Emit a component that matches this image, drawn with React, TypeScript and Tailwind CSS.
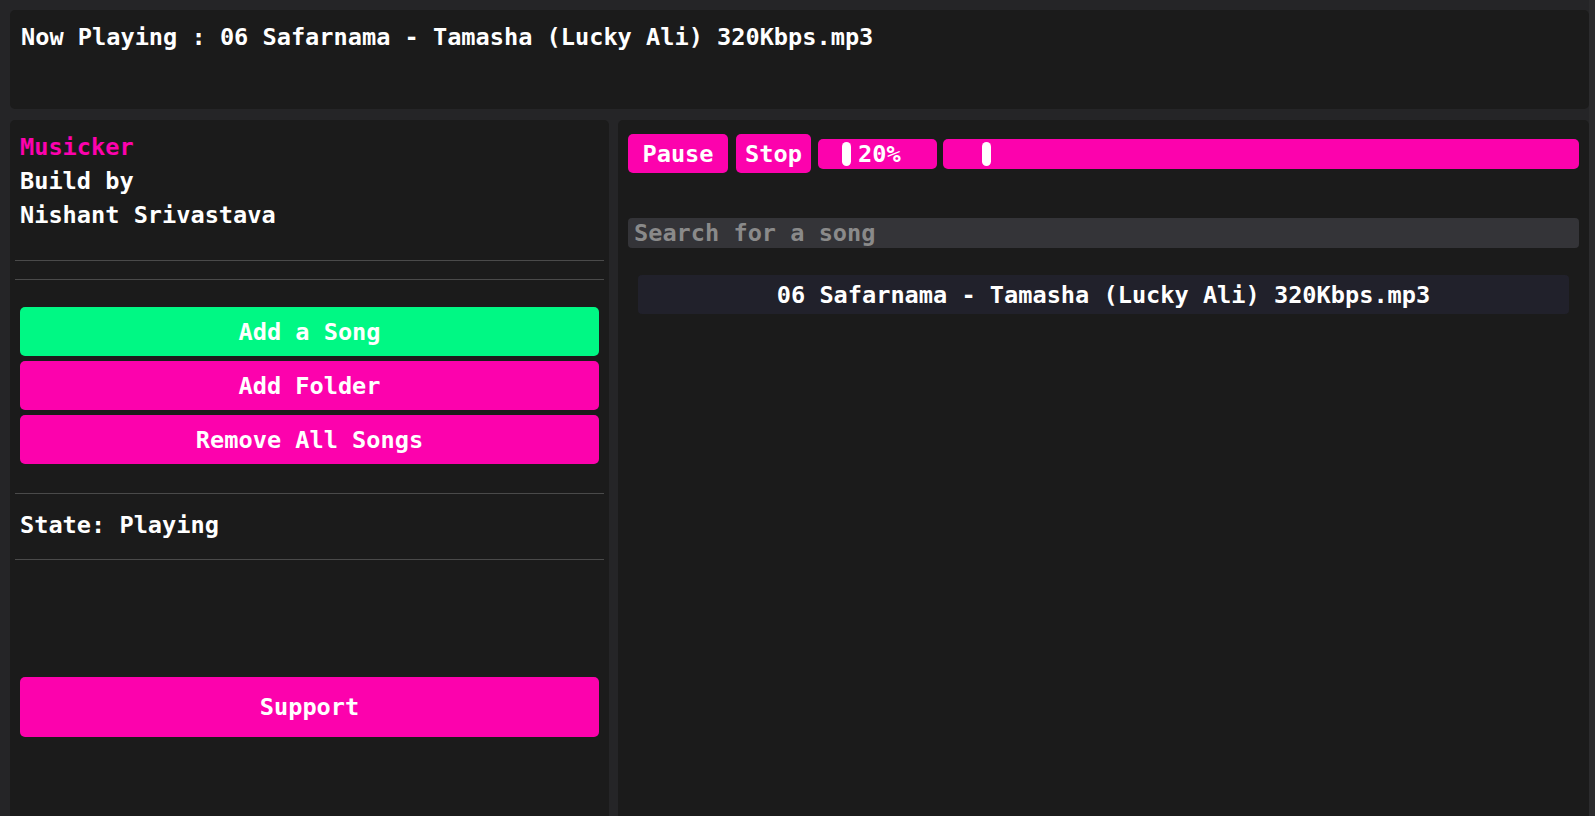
import React from "react";

const pink = "bg-[#fc02ad]";

function SideButton({ label, color, tall }: { label: string; color: string; tall?: boolean }) {
  return (
    <button
      className={`${color} ${tall ? "h-[60px]" : "h-[49px]"} w-full rounded-[5px] text-white text-center font-bold`}
    >
      {label}
    </button>
  );
}

export default function App() {
  const song = "06 Safarnama - Tamasha (Lucky Ali) 320Kbps.mp3";

  return (
    <div className="h-screen overflow-hidden bg-[#252527] flex text-white font-bold font-['DejaVu_Sans_Mono',monospace] text-[23.6px] leading-[34px]">
      <div className="w-[1589px] pl-[10px] pt-[10px] flex flex-col">
        {/* Now playing */}
        <div className="h-[99px] rounded-[5px] bg-[#1b1b1b] px-[11px] pt-[10px]">
          Now Playing : {song}
        </div>

        <div className="mt-[11px] flex gap-[9px] flex-1">
          {/* Sidebar */}
          <div className="w-[599px] rounded-t-[5px] bg-[#1b1b1b] px-[5px] pt-[10px]">
            <div className="px-[5px]">
              <div className="text-[#fc02ad]">Musicker</div>
              <div>Build by</div>
              <div>Nishant Srivastava</div>
            </div>
            <div className="mt-[28px] h-px bg-[#4a4a4a]" />
            <div className="mt-[18px] h-px bg-[#4a4a4a]" />
            <div className="mt-[27px] px-[5px] flex flex-col gap-[5px]">
              <SideButton label="Add a Song" color="bg-[#00f884]" />
              <SideButton label="Add Folder" color={pink} />
              <SideButton label="Remove All Songs" color={pink} />
            </div>
            <div className="mt-[29px] h-px bg-[#4a4a4a]" />
            <div className="mt-[14px] px-[5px]">State: Playing</div>
            <div className="mt-[17px] h-px bg-[#4a4a4a]" />
            <div className="mt-[117px] px-[5px]">
              <SideButton label="Support" color={pink} tall />
            </div>
          </div>

          {/* Player */}
          <div className="flex-1 rounded-t-[5px] bg-[#1b1b1b] px-[10px] pt-[14px]">
            <div className="flex items-center h-[39px]">
              <button className={`${pink} w-[100px] h-[39px] rounded-[5px] text-center font-bold`}>Pause</button>
              <button className={`${pink} ml-[8px] w-[75px] h-[39px] rounded-[5px] text-center font-bold`}>Stop</button>
              <div className={`${pink} ml-[7px] w-[119px] h-[30px] rounded-[5px] flex items-center pl-[24px] gap-[7px]`}>
                <div className="w-[9px] h-[24px] rounded-full bg-white" />
                <span>20%</span>
              </div>
              <div className={`${pink} ml-[6px] flex-1 h-[30px] rounded-[5px] flex items-center pl-[39px]`}>
                <div className="w-[9px] h-[24px] rounded-full bg-white" />
              </div>
            </div>

            <input
              className="mt-[45px] block w-full h-[30px] rounded-[4px] bg-[#343438] px-[6px] font-bold text-white placeholder:text-[#8a8a8a] outline-none"
              placeholder="Search for a song"
            />

            <div className="mt-[27px] mx-[10px] h-[39px] rounded-[4px] bg-[#21212b] flex items-center justify-center">
              {song}
            </div>
          </div>
        </div>
      </div>
      <div className="w-[6px] bg-[#2b2b2d]" />
    </div>
  );
}
